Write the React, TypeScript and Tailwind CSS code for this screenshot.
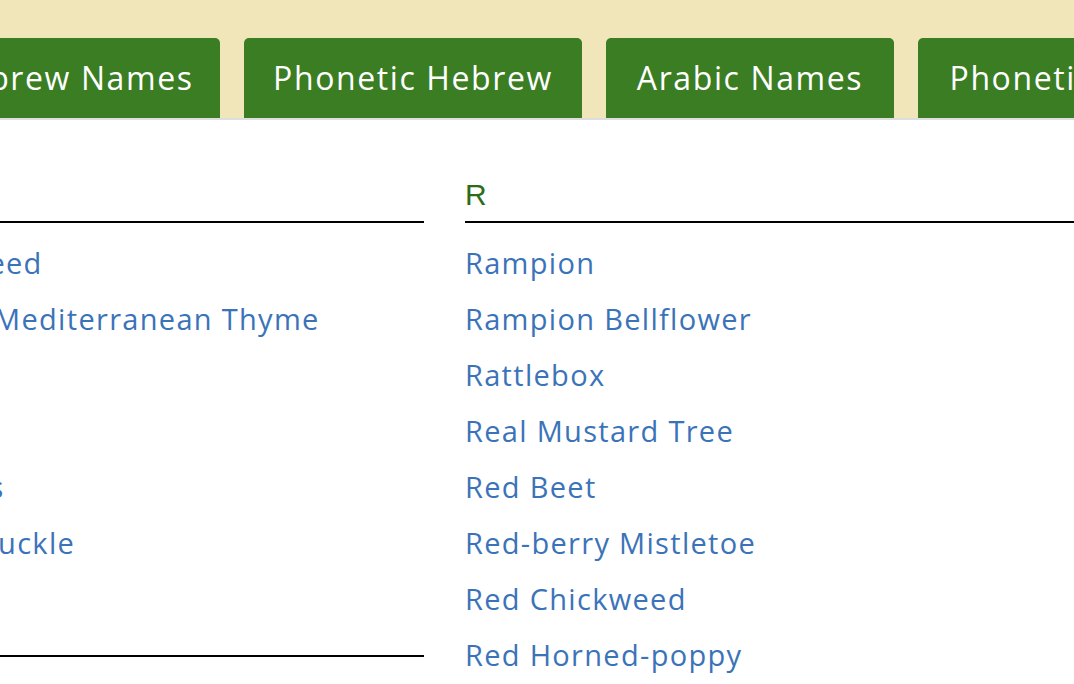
const tabs = [
  { label: 'Hebrew Names', w: 'w-[302px]' },
  { label: 'Phonetic Hebrew', w: 'w-[338px]' },
  { label: 'Arabic Names', w: 'w-[288px]' },
  { label: 'Phonetic Arabic', w: 'w-[320px]' },
];

const pNames = ['Pondweed', 'Purple Mediterranean Thyme', 'Pine', 'Plum', 'Peonies', 'Honeysuckle'];

const rNames = [
  'Rampion',
  'Rampion Bellflower',
  'Rattlebox',
  'Real Mustard Tree',
  'Red Beet',
  'Red-berry Mistletoe',
  'Red Chickweed',
  'Red Horned-poppy',
  'Red Pheasant-eye',
];

function Heading({ letter, className = '' }: { letter: string; className?: string }) {
  return (
    <h2
      className={`text-[30px] leading-[36px] pb-[8px] border-b-2 border-black text-[#2d6b1a] font-normal ${className}`}
      style={{ fontFamily: '"Liberation Sans", Arial, sans-serif' }}
    >
      {letter}
    </h2>
  );
}

function NameList({ names }: { names: string[] }) {
  return (
    <ul className="mt-[12px]">
      {names.map((n) => (
        <li key={n} className="leading-[56px] text-[29px] tracking-[0.045em] text-[#3b73b9] whitespace-nowrap">
          <a href="#">{n}</a>
        </li>
      ))}
    </ul>
  );
}

export default function App() {
  return (
    <div
      className="w-[1074px] h-[684px] overflow-hidden bg-white"
      style={{ fontFamily: '"Open Sans", "Noto Sans", sans-serif' }}
    >
      <header className="h-[120px] bg-[#f1e6b9] border-b-2 border-[#dedede] flex items-end overflow-hidden">
        <nav className="flex gap-[24px] ml-[-82px] shrink-0">
          {tabs.map((t) => (
            <a
              key={t.label}
              href="#"
              className={`${t.w} h-[80px] flex items-center justify-center rounded-t-[5px] bg-[#3a7d23] text-white text-[32px] tracking-[0.05em] whitespace-nowrap shrink-0`}
            >
              {t.label}
            </a>
          ))}
        </nav>
      </header>

      <main className="flex gap-[41px] ml-[-111px] pt-[57px]">
        <section className="w-[535px] shrink-0">
          <Heading letter="P" />
          <NameList names={pNames} />
          <Heading letter="Q" className="mt-[40px]" />
        </section>
        <section className="w-[700px] shrink-0">
          <Heading letter="R" />
          <NameList names={rNames} />
        </section>
      </main>
    </div>
  );
}
